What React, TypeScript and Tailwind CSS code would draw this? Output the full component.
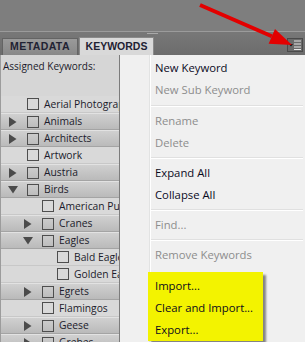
import React from 'react';

type Kind = 'leaf' | 'closed' | 'open';
type Item = { label: string; level: 0 | 1 | 2; kind: Kind };

const keywords: Item[] = [
  { label: 'Aerial Photographers', level: 0, kind: 'leaf' },
  { label: 'Animals', level: 0, kind: 'closed' },
  { label: 'Architects', level: 0, kind: 'closed' },
  { label: 'Artwork', level: 0, kind: 'leaf' },
  { label: 'Austria', level: 0, kind: 'closed' },
  { label: 'Birds', level: 0, kind: 'open' },
  { label: 'American Purple Gallinule', level: 1, kind: 'leaf' },
  { label: 'Cranes', level: 1, kind: 'closed' },
  { label: 'Eagles', level: 1, kind: 'open' },
  { label: 'Bald Eagle', level: 2, kind: 'leaf' },
  { label: 'Golden Eagle', level: 2, kind: 'leaf' },
  { label: 'Egrets', level: 1, kind: 'closed' },
  { label: 'Flamingos', level: 1, kind: 'leaf' },
  { label: 'Geese', level: 1, kind: 'closed' },
  { label: 'Grebes', level: 1, kind: 'closed' },
];

const indent = ['pl-[8px]', 'pl-[23px]', 'pl-[38px]'];

function Twisty({ kind }: { kind: Kind }) {
  if (kind === 'leaf') return <span className="w-[18px] shrink-0" />;
  return (
    <span className="flex w-[18px] shrink-0 items-center">
      {kind === 'closed' ? (
        <svg width="8" height="10" viewBox="0 0 8 10">
          <polygon points="0,0 7.5,5 0,10" fill="#4b4b4b" />
        </svg>
      ) : (
        <svg width="10" height="8" viewBox="0 0 10 8" className="-ml-px">
          <polygon points="0,0 10,0 5,7.5" fill="#4b4b4b" />
        </svg>
      )}
    </span>
  );
}

function KeywordRow({ label, level, kind }: Item) {
  const bar = kind !== 'leaf';
  return (
    <div
      className={`flex h-[17px] items-center whitespace-nowrap ${indent[level]} ${
        bar
          ? 'border-t border-b border-t-[#e2e2e2] border-b-[#a4a4a4] bg-gradient-to-b from-[#d0d0d0] to-[#bababa]'
          : 'border-b border-b-[#c8c8c8] bg-[#d9d9d9]'
      }`}
    >
      <Twisty kind={kind} />
      <span className="h-[12px] w-[12px] shrink-0 border border-[#4e4e4e]" />
      <span className="ml-[5px] text-[10.3px] leading-none text-[#1b1b2b]">{label}</span>
    </div>
  );
}

function MenuItem({ label, off }: { label: string; off?: boolean }) {
  return (
    <div
      className={`flex h-[22px] items-center pl-[35px] text-[11.3px] ${
        off ? 'text-[#8d8d8d]' : 'text-[#0b0b1e]'
      }`}
    >
      {label}
    </div>
  );
}

function Sep({ h }: { h: string }) {
  return (
    <div className={`flex items-center pl-[31px] pr-[2px] ${h}`}>
      <div className="h-[2px] w-full border-t border-t-[#e0e0e0] border-b border-b-white" />
    </div>
  );
}

export default function App() {
  return (
    <div className="relative flex h-[342px] w-[305px] flex-col overflow-hidden bg-[#7e7e7e] font-['Open_Sans',sans-serif]">
      <div className="h-[31px] shrink-0" />

      {/* splitter */}
      <div className="flex h-[4px] shrink-0 flex-col items-center border-t border-t-[#9b9b9b] bg-[#777]">
        <div className="mt-px h-px w-[11px] bg-[#a9a9a9]" />
        <div className="mt-px h-px w-[11px] bg-[#a9a9a9]" />
      </div>

      {/* tabs */}
      <div className="flex h-[20px] shrink-0 items-end gap-px bg-gradient-to-b from-[#767676] to-[#6c6c6c] pl-[2px] font-['Liberation_Sans',sans-serif] text-[10.5px] font-bold text-[#1f2233]">
        <div className="flex h-[17px] w-[76px] items-center justify-center border border-b-0 border-[#646464] bg-gradient-to-b from-[#9a9a9a] to-[#888] tracking-[0.4px]">
          METADATA
        </div>
        <div className="flex h-[18px] w-[75px] items-center justify-center border border-b-0 border-[#8a8a8a] bg-[#d9d9d9]">
          KEYWORDS
        </div>
        <div className="ml-auto mr-[2px] mb-[3px] flex h-[14px] w-[16px] items-center justify-center border border-[#4a4a4a] bg-[#6a6a6a]">
          <svg width="14" height="12" viewBox="0 0 14 12">
            <polygon points="1,5 5,5 3,7.5" fill="#111" />
            <rect x="6" y="1.5" width="7" height="1" fill="#e4e4e4" />
            <rect x="6" y="4.5" width="7" height="1" fill="#e4e4e4" />
            <rect x="6" y="7.5" width="7" height="1" fill="#e4e4e4" />
            <rect x="6" y="10" width="7" height="1" fill="#e4e4e4" />
          </svg>
        </div>
      </div>

      {/* panel */}
      <div className="relative flex-1 bg-[#d6d6d6]">
        <div className="w-[119px] overflow-hidden border-l border-l-[#9c9c9c]">
          <div className="h-[41px] pl-[2px] pt-[4px] text-[10px] text-[#1b1b2b]">Assigned Keywords:</div>
          {keywords.map((k) => (
            <KeywordRow key={k.label} {...k} />
          ))}
        </div>

        {/* flyout menu */}
        <div className="absolute bottom-0 left-[119px] right-0 top-0 border-l border-l-[#7c7c7c] bg-[#f0f0f0] pt-[2px]">
          <div className="absolute bottom-0 left-[29px] top-0 w-px bg-[#e2e3e3]" />
          <div className="absolute bottom-0 left-[30px] top-0 w-px bg-white" />
          <div className="relative">
            <MenuItem label="New Keyword" />
            <MenuItem label="New Sub Keyword" off />
            <Sep h="h-[9px]" />
            <MenuItem label="Rename" off />
            <MenuItem label="Delete" off />
            <Sep h="h-[8px]" />
            <MenuItem label="Expand All" />
            <MenuItem label="Collapse All" />
            <Sep h="h-[8px]" />
            <MenuItem label="Find..." off />
            <Sep h="h-[8px]" />
            <MenuItem label="Remove Keywords" off />
            <div className="ml-[28px] mt-[6px] w-[115px] bg-[#f3f300] pt-[3px] shadow-[3px_3px_2px_rgba(0,0,0,0.45)]">
              {['Import...', 'Clear and Import...', 'Export...'].map((t) => (
                <div key={t} className="flex h-[22px] items-center pl-[7px] text-[11.3px] text-[#0b0b1e]">
                  {t}
                </div>
              ))}
            </div>
          </div>
        </div>
      </div>

      {/* red annotation arrow */}
      <svg className="pointer-events-none absolute left-0 top-0" width="305" height="60" viewBox="0 0 305 60">
        <polygon points="200.8,3.2 199.2,6.8 271,38.1 272.6,34.5" fill="#e30000" />
        <polygon points="292,45 268.6,43.7 275,29" fill="#e30000" />
      </svg>
    </div>
  );
}
